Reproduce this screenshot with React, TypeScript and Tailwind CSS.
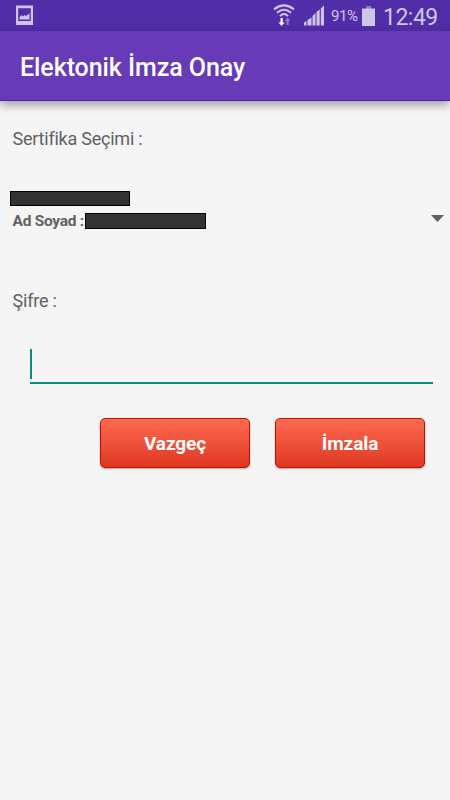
const actions = ["Vazgeç", "İmzala"];

const StatusBar = () => {
  return (
    <div className="flex h-[31px] items-center bg-[#512da8] text-[#cfc5e8]">
      <svg className="ml-[15px]" width="19" height="21" viewBox="0 0 19 21">
        <path
          fill="currentColor"
          fillRule="evenodd"
          d="M1 0.5h17V20H1zM3.2 3.2V16h12.600V3.200z"
        />
        <path fill="currentColor" d="M4.5 14.500V12.500L6.500 10l1.500 1.500L9.500 10l1.500 1 2-1.500 1.500-1v6z" />
      </svg>

      <svg className="ml-auto" width="22" height="24" viewBox="0 0 22 24">
        <g fill="none" stroke="currentColor" strokeWidth="2.1">
          <path d="M1 5.3Q11-2.4 21 5.3" />
          <path d="M4 8.7Q11 2.800 18 8.7" />
          <path d="M7 12.1Q11 7.800 15 12.1" />
        </g>
        <path fill="#fff" d="M7.5 14h2.200v4.500h2l-3.100 3.600-3.100-3.600h2z" />
        <path fill="#8f79c8" d="M13.5 21h2.200v-4h1.800l-2.900-3.400-2.900 3.400h1.800z" />
      </svg>
      <svg className="ml-[9px]" width="21" height="21" viewBox="0 0 21 21">
        <path
          fill="currentColor"
          d="M0 20.500v-3L2.500 16v4.500zM3.500 20.500V15l4-2.500v8zM8.500 20.500V11l3-3v12.500zM12.500 20.500V7l3.200-2.500v16zM16.800 20.500v-17l3.200-3v20z"
        />
      </svg>
      <span className="ml-[6px] mt-px w-[31px] text-[15px] leading-none tracking-[-0.4px]">91%</span>
      <svg width="13" height="20" viewBox="0 0 13 20">
        <path fill="#8f79c8" d="M4 0h5v3H4z" />
        <path fill="currentColor" d="M0 2.500h13V20H0z" />
      </svg>
      <span className="ml-[8px] mt-[3px] w-[67px] text-[23px] leading-none tracking-[-0.5px]">12:49</span>
    </div>
  );
};

export default function App() {
  return (
    <div className="h-[800px] w-[450px] overflow-hidden bg-[#f5f5f5] font-['Roboto',sans-serif] text-[#616161]">
      <StatusBar />
      <header className="flex h-[70px] items-center border-b border-[#5e15b1] bg-[#673ab7] pl-5 shadow-[0_4px_9px_rgba(0,0,0,0.35)]">
        <h1 className="mt-[4px] text-[25px] font-medium leading-[30px] tracking-[-0.07px] text-white">
          Elektonik İmza Onay
        </h1>
      </header>

      <main className="pt-[27px]">
        <p className="pl-[12.5px] text-[18px] leading-[22px] tracking-[-0.23px]">Sertifika Seçimi :</p>

        <div className="mt-[41px] flex items-center justify-between pl-[10px] pr-[6px]">
          <div>
            <div className="h-[15px] w-[120px] border border-black bg-[#333]" />
            <div className="mt-[6px] flex h-[18px] items-center">
              <span className="w-[75px] whitespace-nowrap pl-[2.5px] text-[15.5px] font-bold leading-[18px] tracking-[-0.28px]">
                Ad Soyad :
              </span>
              <div className="h-[16px] w-[121px] border border-black bg-[#333]" />
            </div>
          </div>
          <svg className="mt-[16px]" width="13" height="7" viewBox="0 0 13 7">
            <path fill="#616161" d="M0 0h13L6.5 7z" />
          </svg>
        </div>

        <p className="mt-[60px] pl-[12.5px] text-[18px] leading-[22px] tracking-[-0.2px]">Şifre :</p>

        <div className="ml-[30px] mt-[37px] h-[35px] w-[403px] border-b-2 border-[#009080]">
          <div className="h-[30px] w-[2px] bg-[#009080]" />
        </div>

        <div className="mt-[34px] flex justify-end gap-[25px] pr-[25px]">
          {actions.map((action) => (
            <button
              key={action}
              className="h-[50px] w-[150px] rounded-[5px] border border-[#c01000] bg-linear-to-b from-[#ff6a50] to-[#df3520] pt-[2px] text-[19px] font-bold tracking-[-0.1px] text-white shadow-[0_1px_2px_rgba(0,0,0,0.3)]"
            >
              {action}
            </button>
          ))}
        </div>
      </main>
    </div>
  );
}
